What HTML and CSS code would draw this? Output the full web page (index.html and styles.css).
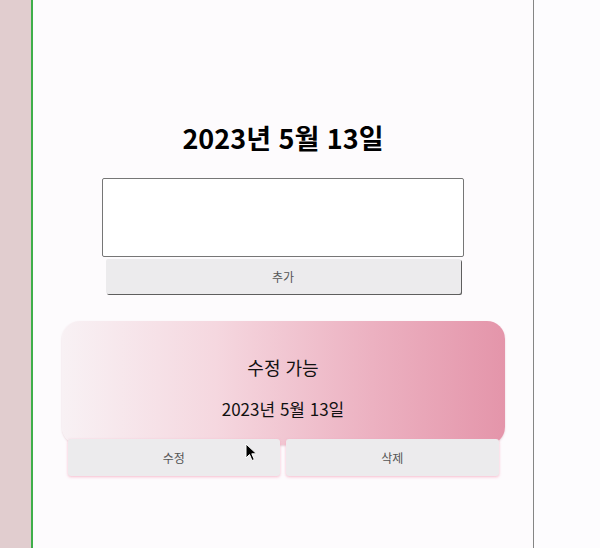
FILE: index.html
```html
<!DOCTYPE html>
<html lang="ko">
<head>
<meta charset="utf-8">
<link rel="stylesheet" href="styles.css">
</head>
<body>
<div class="page">
  <div class="side"></div>
  <main class="main">
    <h1 class="title">2023년 5월 13일</h1>
    <div class="form">
      <textarea class="input"></textarea>
      <button class="add">추가</button>
    </div>
    <div class="item">
      <div class="card">
        <p class="card-text">수정 가능</p>
        <p class="card-date">2023년 5월 13일</p>
      </div>
      <div class="actions">
        <button class="act">수정</button>
        <button class="act">삭제</button>
      </div>
      <svg class="cursor" width="14" height="20" viewBox="0 0 14 20"><path d="M1 1 L1 15 L4.5 11.5 L7 17.5 L9.3 16.5 L6.8 10.8 L11.5 10.8 Z" fill="#000" stroke="#fff" stroke-width="1"/></svg>
    </div>
  </main>
  <div class="rest"></div>
</div>
</body>
</html>
```
FILE: styles.css
```css
html, body {
  margin: 0;
  padding: 0;
  height: 100%;
  background: #fdfbfd;
  font-family: "Noto Sans CJK KR", "Noto Sans", sans-serif;
}
.page {
  display: flex;
  height: 548px;
  overflow: hidden;
}
.side {
  width: 31px;
  background: #e1cdcf;
  border-right: 2px solid #3fae4a;
  flex: none;
}
.main {
  width: 501px;
  flex: none;
  border-right: 1px solid #858585;
  background: #fdfbfd;
  display: flex;
  flex-direction: column;
  align-items: center;
  padding-top: 116px;
  box-sizing: border-box;
}
.rest {
  flex: 1;
  background: #fdfcfe;
}
.title {
  margin: 0;
  font-size: 27px;
  font-weight: 700;
  line-height: 44px;
  color: #000;
}
.form {
  margin-top: 18px;
  display: flex;
  flex-direction: column;
  align-items: center;
}
.input {
  width: 362px;
  height: 79px;
  box-sizing: border-box;
  border: 1px solid #767676;
  border-radius: 2px;
  background: #fff;
  resize: none;
  margin: 0;
  display: block;
}
.add {
  margin-top: 2px;
  width: 355px;
  height: 35px;
  border: none;
  border-radius: 2px;
  background: #ecebed;
  box-shadow: 1px 1px 0 #5e5e5e;
  font-family: inherit;
  font-size: 12px;
  color: #555;
}
.item {
  position: relative;
  margin-top: 27px;
  width: 443px;
}
.card {
  height: 124px;
  border-radius: 18px;
  background: linear-gradient(90deg, #f8f1f4 0%, #f5d7df 35%, #ecb1c1 70%, #e495aa 100%);
  box-shadow: 0 1px 2px rgba(200, 150, 160, 0.4);
  display: flex;
  flex-direction: column;
  align-items: center;
  padding-top: 32px;
  box-sizing: border-box;
}
.card-text {
  margin: 0;
  font-size: 18px;
  line-height: 28px;
  color: #111;
}
.card-date {
  margin: 14px 0 0;
  font-size: 17px;
  line-height: 28px;
  color: #111;
}
.actions {
  display: flex;
  gap: 6px;
  margin-top: -6px;
  padding: 0 6px;
}
.act {
  flex: 1;
  height: 37px;
  border: none;
  border-radius: 3px;
  background: #ecebed;
  box-shadow: 0 1px 3px rgba(245, 160, 185, 0.7);
  font-family: inherit;
  font-size: 12px;
  color: #555;
}
.cursor {
  position: absolute;
  left: 183px;
  top: 122px;
}
```
